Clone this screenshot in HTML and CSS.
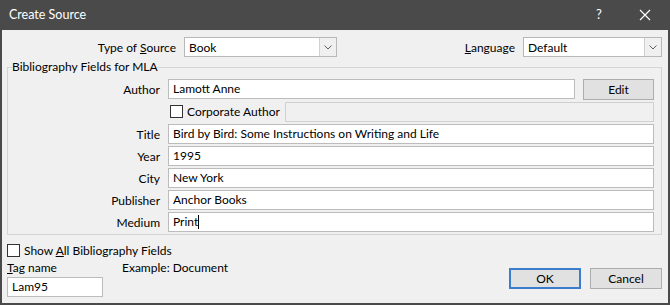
FILE: index.html
```html
<!DOCTYPE html>
<html lang="en">
<head>
  <meta charset="utf-8" />
  <title>Create Source</title>
  <link rel="stylesheet" href="styles.css">
</head>
<body>
  <div class="window">
    <div class="titlebar">
      <span class="title">Create Source</span>
      <span class="title-help">?</span>
      <span class="title-close">
        <svg width="12" height="12" viewBox="0 0 12 12"><path d="M1 1 L11 11 M11 1 L1 11" stroke="#fff" stroke-width="1.2" fill="none"/></svg>
      </span>
    </div>

    <div class="content">
      <div class="top-row">
        <label class="top-label">Type of <u>S</u>ource</label>
        <div class="select source-select">
          <span class="select-value">Book</span>
          <span class="select-arrow"><svg width="8" height="5" viewBox="0 0 8 5"><path d="M0.5 0.5 L4 4 L7.5 0.5" stroke="#606060" fill="none"/></svg></span>
        </div>
        <div class="lang">
          <label><u>L</u>anguage</label>
          <div class="select lang-select">
            <span class="select-value">Default</span>
            <span class="select-arrow"><svg width="8" height="5" viewBox="0 0 8 5"><path d="M0.5 0.5 L4 4 L7.5 0.5" stroke="#606060" fill="none"/></svg></span>
          </div>
        </div>
      </div>

      <fieldset class="group">
        <legend>Bibliography Fields for MLA</legend>

        <div class="field-row">
          <span class="field-label">Author</span>
          <div class="textbox author-box">Lamott Anne</div>
          <button class="btn edit-btn">Edit</button>
        </div>

        <div class="field-row corp-row">
          <span class="field-label"></span>
          <span class="check"></span>
          <span class="corp-text">Corporate Author</span>
          <div class="textbox disabled"></div>
        </div>

        <div class="field-row">
          <span class="field-label">Title</span>
          <div class="textbox">Bird by Bird: Some Instructions on Writing and Life</div>
        </div>
        <div class="field-row">
          <span class="field-label">Year</span>
          <div class="textbox">1995</div>
        </div>
        <div class="field-row">
          <span class="field-label">City</span>
          <div class="textbox">New York</div>
        </div>
        <div class="field-row">
          <span class="field-label">Publisher</span>
          <div class="textbox">Anchor Books</div>
        </div>
        <div class="field-row">
          <span class="field-label">Medium</span>
          <div class="textbox">Print<span class="caret"></span></div>
        </div>
      </fieldset>

      <div class="bottom">
        <div class="bottom-left">
          <div class="show-all">
            <span class="check"></span>
            <span>Show <u>A</u>ll Bibliography Fields</span>
          </div>
          <div class="tag-row">
            <span class="tag-label"><u>T</u>ag name</span>
            <span>Example: Document</span>
          </div>
          <div class="textbox tag-box">Lam95</div>
        </div>
        <div class="buttons">
          <button class="btn ok-btn">OK</button>
          <button class="btn">Cancel</button>
        </div>
      </div>
    </div>
  </div>
</body>
</html>
```

FILE: styles.css
```css
* {
  margin: 0;
  padding: 0;
  box-sizing: border-box;
}

body {
  background-color: #f0f0f0;
  font-family: "Segoe UI", Lato, "Noto Sans", sans-serif;
  font-size: 12px;
  color: #000;
}

.window {
  width: 670px;
  height: 305px;
  background-color: #f0f0f0;
  border: 2px solid #4a4a4a;
  border-top: none;
  overflow: hidden;
}

/* Title bar */
.titlebar {
  height: 30px;
  margin: 0 -2px;
  background-color: #4a4a4a;
  color: #fff;
  display: flex;
  align-items: center;
  padding-left: 9px;
  font-size: 12.5px;
}

.title {
  flex: 1;
  padding-bottom: 2px;
}

.title-help {
  width: 46px;
  text-align: center;
  font-size: 13px;
  padding-bottom: 2px;
}

.title-close {
  width: 46px;
  display: flex;
  justify-content: center;
  margin-right: 2px;
}

.content {
  padding-top: 7px;
}

/* Top row */
.top-row {
  display: flex;
  align-items: center;
  padding-right: 6px;
  height: 20px;
}

.top-label {
  width: 174px;
  text-align: right;
  margin-right: 8px;
}

.select {
  height: 20px;
  background-color: #fff;
  border: 1px solid #b8b8b8;
  display: flex;
  align-items: center;
}

.select-value {
  flex: 1;
  padding-left: 4px;
}

.select-arrow {
  width: 17px;
  height: 18px;
  background-color: #f0f0f0;
  border-left: 1px solid #d0d0d0;
  display: flex;
  justify-content: center;
  align-items: center;
}

.source-select {
  width: 153px;
}

.lang {
  margin-left: auto;
  display: flex;
  align-items: center;
}

.lang label {
  margin-right: 8px;
}

.lang-select {
  width: 139px;
}

/* Group box */
.group {
  margin: 2px 6px 0 5px;
  border: 1px solid #d4d4d4;
  padding: 4px 7px 2px 4px;
}

.group legend {
  line-height: 16px;
  padding: 0;
}

.field-row {
  display: flex;
  align-items: center;
  height: 20px;
  margin-bottom: 2px;
}

.field-row:last-child {
  margin-bottom: 0;
}

.corp-row {
  height: 21px;
}

.field-label {
  width: 148px;
  margin-right: 8px;
  text-align: right;
  flex-shrink: 0;
}

.textbox {
  flex: 1;
  height: 20px;
  line-height: 18px;
  background-color: #fff;
  border: 1px solid #bcbcbc;
  padding-left: 4px;
  white-space: nowrap;
}

.textbox.disabled {
  flex: none;
  width: 369px;
  background-color: #f0f0f0;
  border-color: #d0d0d0;
}

.author-box {
  flex: none;
  width: 407px;
  margin-right: 8px;
}

.caret {
  display: inline-block;
  width: 1px;
  height: 14px;
  background-color: #000;
  vertical-align: -3px;
}

.check {
  width: 13px;
  height: 13px;
  border: 1px solid #333;
  background-color: #fff;
  flex-shrink: 0;
}

.corp-row .check {
  margin-left: 2px;
  margin-right: 4px;
}

.corp-text {
  flex: 1;
  white-space: nowrap;
}

/* Buttons */
.btn {
  font-family: inherit;
  font-size: 12px;
  width: 72px;
  height: 21px;
  background-color: #e1e1e1;
  border: 1px solid #adadad;
  color: #000;
}

.edit-btn {
  width: 71px;
}

.ok-btn {
  border: 2px solid #3b7ccc;
}

/* Bottom area */
.bottom {
  display: flex;
  justify-content: space-between;
  align-items: flex-end;
  padding: 0 6px 0 5px;
}

.show-all {
  display: flex;
  align-items: center;
  gap: 4px;
  height: 16px;
  margin-top: 7px;
}

.tag-row {
  display: flex;
  margin-top: 2px;
  height: 17px;
}

.tag-label {
  width: 115px;
}

.tag-box {
  width: 96px;
  flex: none;
}

.buttons {
  display: flex;
  gap: 9px;
  margin-bottom: 8px;
}
```
